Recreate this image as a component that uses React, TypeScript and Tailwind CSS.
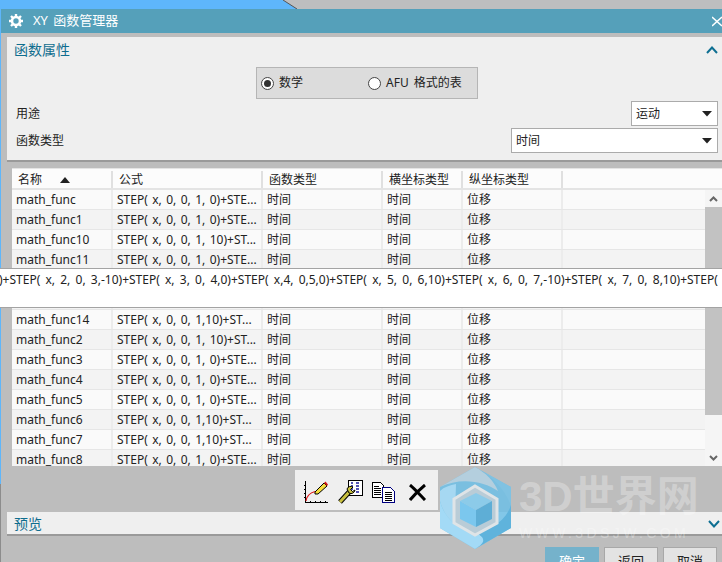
const cols = ["w-[101px]", "w-[150px]", "w-[120px]", "w-[80px]", "w-[100px]"];

const rows = [
  ["math_func", "STEP( x, 0, 0, 1, 0)+STE..."],
  ["math_func1", "STEP( x, 0, 0, 1, 0)+STE..."],
  ["math_func10", "STEP( x, 0, 0, 1, 10)+ST..."],
  ["math_func11", "STEP( x, 0, 0, 1, 0)+STE..."],
  ["math_func12", "STEP( x, 0, 0, 1, 0)+STE..."],
  ["math_func13", "STEP( x, 0, 0, 1, 0)+STE..."],
  ["math_func14", "STEP( x, 0, 0, 1,10)+ST..."],
  ["math_func2", "STEP( x, 0, 0, 1, 10)+ST..."],
  ["math_func3", "STEP( x, 0, 0, 1, 0)+STE..."],
  ["math_func4", "STEP( x, 0, 0, 1, 0)+STE..."],
  ["math_func5", "STEP( x, 0, 0, 1, 0)+STE..."],
  ["math_func6", "STEP( x, 0, 0, 1,10)+ST..."],
  ["math_func7", "STEP( x, 0, 0, 1,10)+ST..."],
  ["math_func8", "STEP( x, 0, 0, 1, 0)+STE..."],
];

const Caret = () => (
  <svg width="10" height="6" viewBox="0 0 10 6">
    <path d="M0 0h10L5 5.5z" fill="#222" />
  </svg>
);

const Select = ({ label, className }: { label: string; className: string }) => (
  <div className={`flex h-[25px] items-center justify-between border border-[#ababab] bg-white pl-1 pr-[5px] ${className}`}>
    <span>{label}</span>
    <Caret />
  </div>
);

const Chevron = ({ up }: { up?: boolean }) => (
  <svg width="12" height="8" viewBox="0 0 12 8" className="shrink-0">
    <path d={up ? "M1 7l5-5.5L11 7" : "M1 1l5 5.5L11 1"} fill="none" stroke="#0e6f92" strokeWidth="2" />
  </svg>
);

const Radio = ({ on }: { on?: boolean }) => (
  <span className="flex h-[13px] w-[13px] items-center justify-center rounded-full border border-[#444] bg-white">
    {on && <span className="h-[7px] w-[7px] rounded-full bg-[#333]" />}
  </span>
);

const Gear = () => (
  <svg width="14" height="14" viewBox="0 0 14 14" className="shrink-0">
    <circle cx="7" cy="7" r="4" fill="none" stroke="white" strokeWidth="2.6" />
    <path d="M7 0v3M7 11v3M0 7h3M11 7h3M2 2l2 2M10 10l2 2M12 2l-2 2M4 10l-2 2" stroke="white" strokeWidth="2.4" />
  </svg>
);

const Watermark = () => (
  <div className="absolute left-[440px] top-[467px] flex items-start">
    <svg width="72" height="82" viewBox="0 0 72 82">
      <path d="M35 0L71 20V61L35 82L0 61V20z" fill="#6fbfe6" opacity="0.85" />
      <path d="M0 20L35 0C46 6 54 14 58 24C44 14 20 10 0 20z" fill="#b4cfde" />
      <path d="M35 0L71 20V40C68 26 52 8 35 0z" fill="#80c2e2" />
      <path d="M0 24C4 20 10 18 16 17L15 48L30 62C16 62 4 50 0 34z" fill="#a6d8f2" />
      <path d="M0 34C4 50 16 62 34 64L48 74L35 82L0 61z" fill="#a3daf6" />
      <path d="M34 64C50 64 66 54 71 38V61L35 82C48 74 44 70 34 64z" fill="#5fb3dc" />
      <path d="M35 19L57 32V56L35 68L14 56V32z" fill="#b9ccd7" stroke="#dfe4e7" strokeWidth="3" />
      <path d="M20 34L36 26L52 34L36 43z" fill="#8ccbe9" />
      <path d="M20 34L36 43V60L20 52z" fill="#7bc7ee" />
      <path d="M52 34L36 43V60L52 52z" fill="#5eaed6" />
    </svg>
    <div className="ml-[7px] flex w-[190px] flex-col whitespace-nowrap font-['Liberation_Sans','Noto_Sans_CJK_SC',sans-serif] text-white/30">
      <span className="mt-[9px] h-[42px] text-[42px] font-bold leading-[42px]">3D世界网</span>
      <span className="mt-[8px] text-[14px] leading-[14px] tracking-[3.4px]">WWW.3DSJW.COM</span>
    </div>
  </div>
);

export default function App() {
  return (
    <div className="relative flex h-[562px] w-[722px] overflow-hidden bg-[#bdbdbd] font-['Noto_Sans','Noto_Sans_CJK_SC',sans-serif] text-[12px] text-[#222]">
      <div className="flex w-px shrink-0 flex-col bg-[#5eb6fb]">
        <div className="h-[484px]" />
        <div className="flex-1 bg-[#8c8c8c]" />
      </div>
      <div className="flex min-w-0 flex-1 flex-col">
        <div className="relative h-[9px] shrink-0 bg-[#5eb6fb]">
          <svg width="440" height="9" viewBox="0 0 440 9" className="absolute left-[282px] top-0">
            <path d="M0 0L14 9H440V0z" fill="#bdbebf" />
            <path d="M0 0L14 9" stroke="#555" strokeWidth="1" />
          </svg>
        </div>
        <div className="flex h-[24px] shrink-0 items-center bg-[#55a0ba] pl-[8px] text-[13px] text-white">
          <Gear />
          <span className="ml-[10px] flex-1 [word-spacing:2px]">XY 函数管理器</span>
          <svg width="10" height="11" viewBox="0 0 10 11">
            <path d="M0 1l10 9M10 1L0 10" stroke="white" strokeWidth="1.6" />
          </svg>
        </div>
        <div className="mt-[4px] ml-[6px] h-[125px] shrink-0 border-b-2 border-[#9a9a9a] bg-[#efefef] pt-[4px] pr-[4px] pl-[9px]">
          <div className="ml-[-2px] flex items-center justify-between text-[14px] text-[#0f6d8e]">
            <span className="leading-[17px]">函数属性</span>
            <Chevron up />
          </div>
          <div className="mt-[9px] ml-[240px] flex h-[32px] w-[222px] items-center border border-[#b5b5b5] bg-[#dcdcdc] pl-[4px]">
            <Radio on />
            <span className="ml-[5px] w-[89px]">数学</span>
            <Radio />
            <span className="ml-[5px] whitespace-nowrap [word-spacing:2px]">AFU 格式的表</span>
          </div>
          <div className="mt-[2px] flex items-center justify-between">
            <span>用途</span>
            <Select label="运动" className="w-[87px]" />
          </div>
          <div className="mt-[2px] flex items-center justify-between">
            <span>函数类型</span>
            <Select label="时间" className="w-[207px]" />
          </div>
        </div>
        <div className="mt-[6px] ml-[11px] flex h-[298px] shrink-0 flex-col overflow-hidden bg-[#fafafa]">
          <div className="flex h-[22px] shrink-0 border-t border-b-2 border-[#e4e4e4] bg-[#fcfcfc] pt-[2px]">
            <div className={`${cols[0]} flex items-center border-r-2 border-[#e0e0e0] pl-[6px]`}>
              <span>名称</span>
              <svg width="10" height="6" viewBox="0 0 10 6" className="ml-[18px]">
                <path d="M0 6h10L5 0z" fill="#222" />
              </svg>
            </div>
            <div className={`${cols[1]} flex items-center border-r-2 border-[#e0e0e0] pl-[6px]`}>公式</div>
            <div className={`${cols[2]} flex items-center border-r-2 border-[#e0e0e0] pl-[6px]`}>函数类型</div>
            <div className={`${cols[3]} flex items-center border-r-2 border-[#e0e0e0] pl-[6px]`}>横坐标类型</div>
            <div className={`${cols[4]} flex items-center border-r-2 border-[#e0e0e0] pl-[6px]`}>纵坐标类型</div>
          </div>
          <div className="flex min-h-0 flex-1">
            <div className="min-w-0 flex-1 overflow-hidden">
              {rows.map(([name, formula], i) => (
                <div key={name} className={`flex h-[20px] border-b border-[#e6e6e6] ${i % 2 ? "bg-[#f3f3f3]" : "bg-[#fafafa]"}`}>
                  <div className={`${cols[0]} flex items-center whitespace-nowrap border-r-2 border-[#ececec] pl-[4px]`}>{name}</div>
                  <div className={`${cols[1]} flex items-center overflow-hidden whitespace-nowrap border-r-2 border-[#ececec] pl-[4px] [word-spacing:1.3px]`}>{formula}</div>
                  <div className={`${cols[2]} flex items-center border-r-2 border-[#ececec] pl-[4px]`}>时间</div>
                  <div className={`${cols[3]} flex items-center border-r-2 border-[#ececec] pl-[4px]`}>时间</div>
                  <div className={`${cols[4]} flex items-center border-r-2 border-[#ececec] pl-[4px]`}>位移</div>
                </div>
              ))}
            </div>
            <div className="flex w-[17px] shrink-0 flex-col bg-[#f5f5f5]">
              <div className="flex h-[17px] items-center justify-center">
                <svg width="9" height="6" viewBox="0 0 9 6">
                  <path d="M1 5l3.5-3.5L8 5" fill="none" stroke="#666" strokeWidth="2" />
                </svg>
              </div>
              <div className="h-[208px] bg-[#c2c2c2]" />
              <div className="flex-1" />
              <div className="flex h-[17px] items-center justify-center">
                <svg width="9" height="6" viewBox="0 0 9 6">
                  <path d="M1 1l3.5 3.5L8 1" fill="none" stroke="#666" strokeWidth="2" />
                </svg>
              </div>
            </div>
          </div>
        </div>
        <div className="mt-[4px] ml-[294px] flex h-[40px] w-[143px] shrink-0 items-center bg-[#efefef] pl-[9px]">
          <svg width="24" height="24" viewBox="0 0 24 24" shapeRendering="crispEdges" className="mt-[4px]">
            <path d="M1.5 1v21.5H24" fill="none" stroke="#000" />
            <path d="M0 5.5h2M0 9.5h2M0 13.5h2M0 17.5h2M6.5 21v1M11.5 21v1M16.5 21v1M21.5 21v1" stroke="#000" />
            <path d="M2 21C3 15 6 13 11 11.5" fill="none" stroke="#e01010" strokeWidth="1.2" shapeRendering="auto" />
            <path d="M11 12L20 3l3 3-9 8-3 0z" fill="#f4dc3c" stroke="#000" shapeRendering="auto" />
            <path d="M20 3l1.5-1.5 2.5 3L23 6z" fill="#d01818" shapeRendering="auto" />
          </svg>
          <svg width="25" height="24" viewBox="0 0 25 24" className="ml-[10px] mt-[4px]">
            <rect x="10.5" y="0.5" width="14" height="15" fill="#fff" stroke="#000" />
            <path d="M13 3h2M13 6h2M13 9h2M13 12h2M18 3h3M18 6h3M18 9h3M18 12h3" stroke="#1a1a9a" strokeWidth="1.4" />
            <path d="M2 22L12 11" stroke="#000" strokeWidth="5" />
            <path d="M2 22L12 11" stroke="#c8c040" strokeWidth="3" />
            <path d="M9 9a4 4 0 0 1 6-2l-2.5 2.5 2 2L17 10a4 4 0 0 1-6 3z" fill="#c8c040" stroke="#000" />
          </svg>
          <svg width="24" height="21" viewBox="0 0 24 21" shapeRendering="crispEdges" className="ml-[9px] mt-[5px]">
            <path d="M.5.5h8l3 3v11.5H.5z" fill="#fff" stroke="#000" />
            <path d="M2 4.5h5M2 6.5h7M2 8.5h7M2 10.5h7M2 12.5h7" stroke="#000" />
            <path d="M10.5 5.5h8l3.5 3.5v11.5H10.5z" fill="#fff" stroke="#000080" />
            <path d="M12.5 10.5h7M12.5 12.5h7M12.5 14.5h7M12.5 16.5h7M12.5 18.5h7" stroke="#000" />
          </svg>
          <svg width="18" height="17" viewBox="0 0 18 17" className="ml-[13px] mt-[5px]">
            <path d="M1 1C7 6 11 11 16 16M16 1C11 5 6 10 1 16" fill="none" stroke="#000" strokeWidth="3" />
          </svg>
        </div>
        <div className="mt-[2px] ml-[6px] flex h-[24px] shrink-0 items-center justify-between border-b-2 border-[#9a9a9a] bg-[#efefef] pt-[1px] pr-[2px] pl-[7px] text-[14px] text-[#0f6d8e]">
          <span>预览</span>
          <Chevron />
        </div>
        <div className="mt-[11px] flex shrink-0 justify-end gap-[5px] pr-[5px] text-[13px]">
          <div className="flex h-[26px] w-[54px] justify-center bg-[#75b2cb] pt-[5px] text-white">确定</div>
          <div className="flex h-[26px] w-[54px] justify-center border border-[#a8a8a8] bg-[#e3e3e3] pt-[4px]">返回</div>
          <div className="flex h-[26px] w-[54px] justify-center border border-[#a8a8a8] bg-[#e3e3e3] pt-[4px]">取消</div>
        </div>
      </div>
      <div className="absolute left-0 top-[268px] h-[40px] w-[722px] overflow-hidden border-y border-[#a3a3a3] bg-white pt-[2px] whitespace-nowrap [word-spacing:2.1px]">
        <span className="ml-[-1px]">)+STEP( x, 2, 0, 3,-10)+STEP( x, 3, 0, 4,0)+STEP( x,4, 0,5,0)+STEP( x, 5, 0, 6,10)+STEP( x, 6, 0, 7,-10)+STEP( x, 7, 0, 8,10)+STEP(</span>
      </div>
      <Watermark />
    </div>
  );
}
